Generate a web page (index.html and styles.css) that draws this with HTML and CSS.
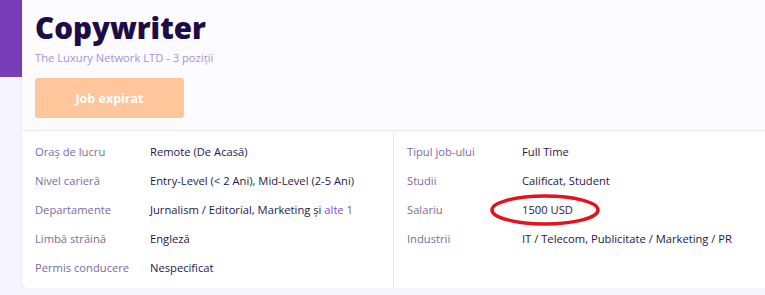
FILE: index.html
```html
<!DOCTYPE html>
<html lang="ro">

<head>
    <meta charset="utf-8">
    <title>Copywriter</title>
    <link rel="stylesheet" href="styles.css">
</head>

<body>
    <div class="page">
        <div class="accent"></div>

        <div class="card">
            <div class="card-head">
                <h1 class="title">Copywriter</h1>
                <div class="company">The Luxury Network LTD - 3 poziţii</div>
                <button class="btn-expired" disabled>Job expirat</button>
            </div>

            <div class="details">
                <div class="col">
                    <div class="row"><span class="label">Oraş de lucru</span><span class="value">Remote (De Acasă)</span></div>
                    <div class="row"><span class="label">Nivel carieră</span><span class="value">Entry-Level (&lt; 2 Ani), Mid-Level (2-5 Ani)</span></div>
                    <div class="row"><span class="label">Departamente</span><span class="value">Jurnalism / Editorial, Marketing şi <a href="#">alte 1</a></span></div>
                    <div class="row"><span class="label">Limbă străină</span><span class="value">Engleză</span></div>
                    <div class="row"><span class="label">Permis conducere</span><span class="value">Nespecificat</span></div>
                </div>
                <div class="col col-right">
                    <div class="row"><span class="label">Tipul job-ului</span><span class="value">Full Time</span></div>
                    <div class="row"><span class="label">Studii</span><span class="value">Calificat, Student</span></div>
                    <div class="row salary">
                        <span class="label">Salariu</span><span class="value">1500 USD</span>
                        <!-- hand-drawn highlight -->
                        <svg class="circle" width="114" height="34" viewBox="0 0 114 34">
                            <ellipse cx="57" cy="17" rx="53" ry="14" fill="none" stroke="#e4121c" stroke-width="3.5"/>
                        </svg>
                    </div>
                    <div class="row"><span class="label">Industrii</span><span class="value">IT / Telecom, Publicitate / Marketing / PR</span></div>
                </div>
            </div>
        </div>
    </div>
</body>
</html>
```

FILE: styles.css
```css
body,
html {
    margin: 0;
    padding: 0;
    background-color: #f6f4fe;
    font-family: 'Open Sans', sans-serif;
}

.page {
    display: flex;
    align-items: flex-start;
}

.accent {
    width: 22px;
    height: 77px;
    background-color: #7a3db8;
    flex-shrink: 0;
}

.card {
    flex: 1;
    background-color: white;
    border-radius: 0 0 0 6px;
    box-shadow: 0 1px 3px rgba(90, 60, 160, 0.08);
}

.card-head {
    background-color: #fcfbff;
    padding: 10px 13px 12px 13px;
    border-bottom: 1px solid #ebe7f9;
}

.title {
    margin: 0;
    font-size: 29.5px;
    font-weight: 800;
    line-height: 36px;
    color: #1e0c47;
}

.company {
    font-size: 11.2px;
    color: #a794d4;
    margin: 4px 0 12px 0;
    line-height: 16px;
}

.btn-expired {
    width: 149px;
    height: 40px;
    border: none;
    border-radius: 3px;
    background-color: #ffc59b;
    color: white;
    font-family: 'Open Sans', sans-serif;
    font-weight: 700;
    font-size: 12.5px;
}

.details {
    display: flex;
}

.col {
    width: 345px;
    padding: 6px 13px 6px 13px;
    border-right: 1px solid #ebe7f9;
}

.col-right {
    flex: 1;
    border-right: none;
}

.row {
    display: flex;
    height: 29px;
    align-items: center;
    font-size: 11.2px;
    position: relative;
}

.label {
    width: 115px;
    flex-shrink: 0;
    color: #7b6c9c;
}

.value {
    color: #26184a;
}

.value a {
    color: #7a4fd0;
    text-decoration: none;
}

.salary .circle {
    position: absolute;
    left: 81px;
    top: -2px;
}
```
